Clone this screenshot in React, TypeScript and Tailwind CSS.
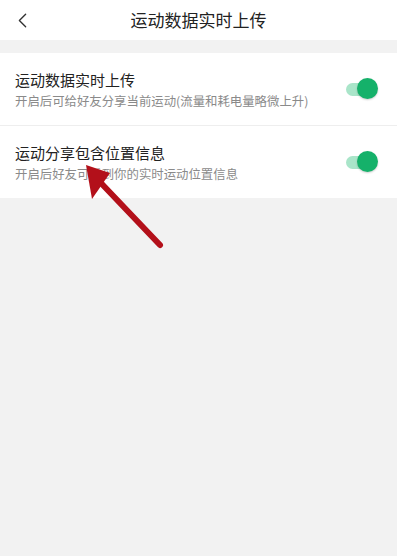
import { ChevronLeft } from "lucide-react";

const rows = [
  { title: "运动数据实时上传", desc: "开启后可给好友分享当前运动(流量和耗电量略微上升)" },
  { title: "运动分享包含位置信息", desc: "开启后好友可看到你的实时运动位置信息" },
];

function Toggle() {
  return (
    <div className="relative h-[22px] w-[32px]">
      <div className="absolute left-0 top-[5px] h-[13px] w-[28px] rounded-full bg-[#a9e5c9]" />
      <div className="absolute right-0 top-0 h-[21px] w-[21px] rounded-full bg-[#15b16a] shadow-[0_1px_2px_rgba(0,0,0,0.2)]" />
    </div>
  );
}

export default function App() {
  return (
    <div
      className="relative flex h-[556px] w-[397px] flex-col bg-[#f2f2f2]"
      style={{ fontFamily: '"Noto Sans CJK SC", "Noto Sans", sans-serif' }}
    >
      <div className="relative flex h-[40px] items-center justify-center bg-white">
        <ChevronLeft className="absolute left-[10px] top-[8px] h-[25px] w-[25px] text-[#333]" strokeWidth={1.3} />
        <span className="text-[17px] text-[#222]">运动数据实时上传</span>
      </div>
      <div className="mt-[13px] bg-white">
        {rows.map((r, i) => (
          <div key={r.title} className={`flex items-center pl-[15px] pr-[19px] ${i === 0 ? "h-[73px] border-b border-[#eeeeee]" : "h-[72px]"}`}>
            <div className="flex-1">
              <div className="text-[15px] leading-[20px] text-[#222]">{r.title}</div>
              <div className="mt-[3px] text-[12.4px] leading-[16px] text-[#8a8a8a]">{r.desc}</div>
            </div>
            <Toggle />
          </div>
        ))}
      </div>
      <svg className="absolute left-0 top-0" width="397" height="556" viewBox="0 0 397 556">
        <line x1="160" y1="245" x2="100" y2="182" stroke="#b3101a" strokeWidth="6" strokeLinecap="round" />
        <polygon points="86,165 110,173 92,199" fill="#b3101a" />
      </svg>
    </div>
  );
}
